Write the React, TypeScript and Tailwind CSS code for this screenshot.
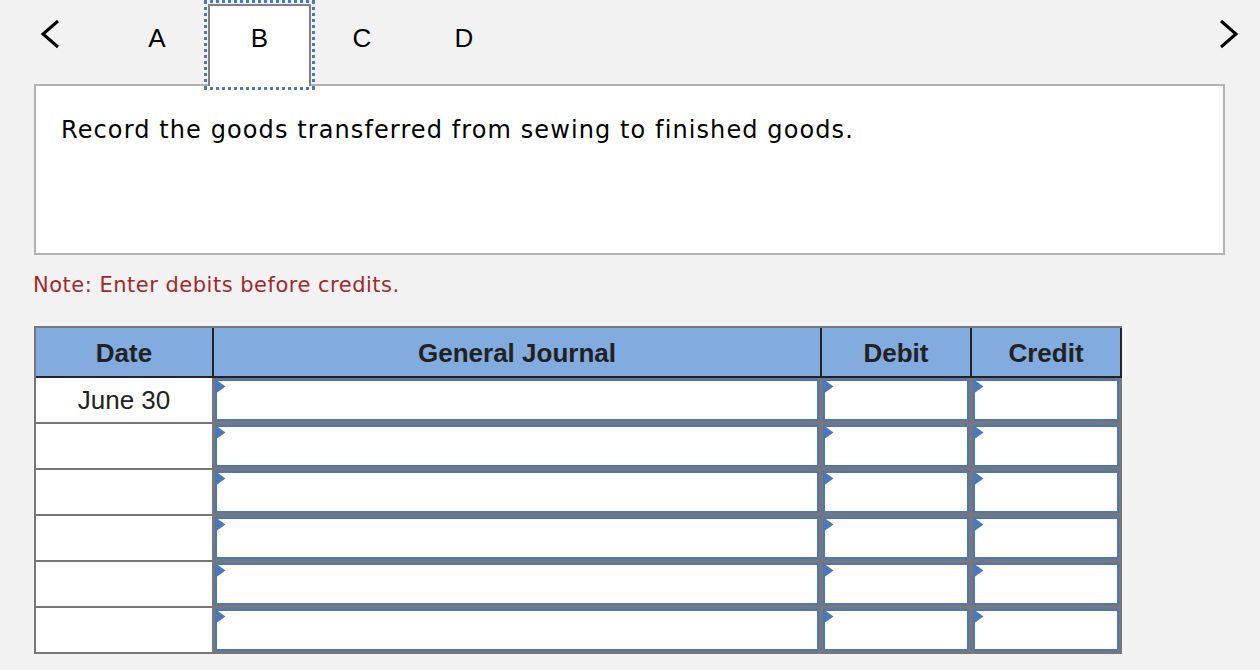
const rows = [0, 1, 2, 3, 4, 5];

function Flag() {
  return (
    <svg className="absolute left-[-2px] top-[-2px]" width="11" height="15" viewBox="0 0 11 15">
      <polygon points="0,0 10.5,7.5 0,15" fill="#4a78bc" />
    </svg>
  );
}

function InputCell({ w }: { w: string }) {
  return (
    <div className={`${w} h-[46px] shrink-0 border-r-2 border-b-2 border-[#777] bg-[#777] p-px`}>
      <div className="relative h-full w-full border-2 border-[#4a78bc] bg-white">
        <Flag />
      </div>
    </div>
  );
}

export default function App() {
  return (
    <div className="min-h-[670px] w-[1260px] bg-[#f2f2f2] font-['Liberation_Sans',Arial,sans-serif]">
      {/* tabs */}
      <div className="relative z-10 -mb-[2px] flex h-[86px] items-end">
        <div className="flex h-[86px] w-[106px] shrink-0 items-start">
          <svg className="ml-[40px] mt-[18px]" width="20" height="32" viewBox="0 0 20 32">
            <polyline points="18,3 3,16 18,29" fill="none" stroke="#000" strokeWidth="3" />
          </svg>
        </div>
        {["A", "B", "C", "D"].map((t) => (
          <div
            key={t}
            className={
              t === "B"
                ? "h-[82px] w-[103px] shrink-0 border-2 border-b-0 border-[#808080] bg-white pt-[17px] text-center text-[26px] leading-[30px] text-black outline-[3px] outline-offset-[1px] outline-dotted outline-[#4a78bc]"
                : "h-[82px] w-[102px] shrink-0 border-2 border-transparent pt-[17px] text-center text-[26px] leading-[30px] text-black"
            }
          >
            {t}
          </div>
        ))}
        <div className="ml-auto flex h-[86px] items-start pr-[22px]">
          <svg className="mt-[18px]" width="20" height="32" viewBox="0 0 20 32">
            <polyline points="3,3 18,16 3,29" fill="none" stroke="#000" strokeWidth="3" />
          </svg>
        </div>
      </div>

      {/* question box */}
      <div className="ml-[34px] h-[171px] w-[1191px] border-2 border-[#b3b3b3] bg-white pl-[25px] pt-[30px] font-['DejaVu_Sans',Verdana,sans-serif] text-[24px] leading-[28px] tracking-[1.1px] text-black">
        Record the goods transferred from sewing to finished goods.
      </div>

      <p className="ml-[33px] mt-[18px] font-['DejaVu_Sans',Verdana,sans-serif] text-[21px] leading-[24px] tracking-[0.5px] text-[#a3282a]">
        Note: Enter debits before credits.
      </p>

      {/* journal table */}
      <div className="ml-[34px] mt-[29px] w-[1088px] border-l-2 border-t-2 border-[#777]">
        <div className="flex h-[50px] bg-[#82abdf] text-[26px] font-bold text-[#222]">
          <div className="flex w-[178px] items-center justify-center border-r-2 border-b-2 border-[#222] pt-[2px]">Date</div>
          <div className="flex w-[608px] items-center justify-center border-r-2 border-b-2 border-[#222] pt-[2px]">General Journal</div>
          <div className="flex w-[150px] items-center justify-center border-r-2 border-b-2 border-[#222] pt-[2px]">Debit</div>
          <div className="flex w-[150px] items-center justify-center border-r-2 border-b-2 border-[#222] pt-[2px]">Credit</div>
        </div>
        {rows.map((r) => (
          <div key={r} className="flex">
            <div className="flex h-[46px] w-[178px] shrink-0 items-center justify-center border-r-2 border-b-2 border-[#777] bg-white text-[26px] text-[#222]">
              {r === 0 ? "June 30" : ""}
            </div>
            <InputCell w="w-[608px]" />
            <InputCell w="w-[150px]" />
            <InputCell w="w-[150px]" />
          </div>
        ))}
      </div>
    </div>
  );
}
